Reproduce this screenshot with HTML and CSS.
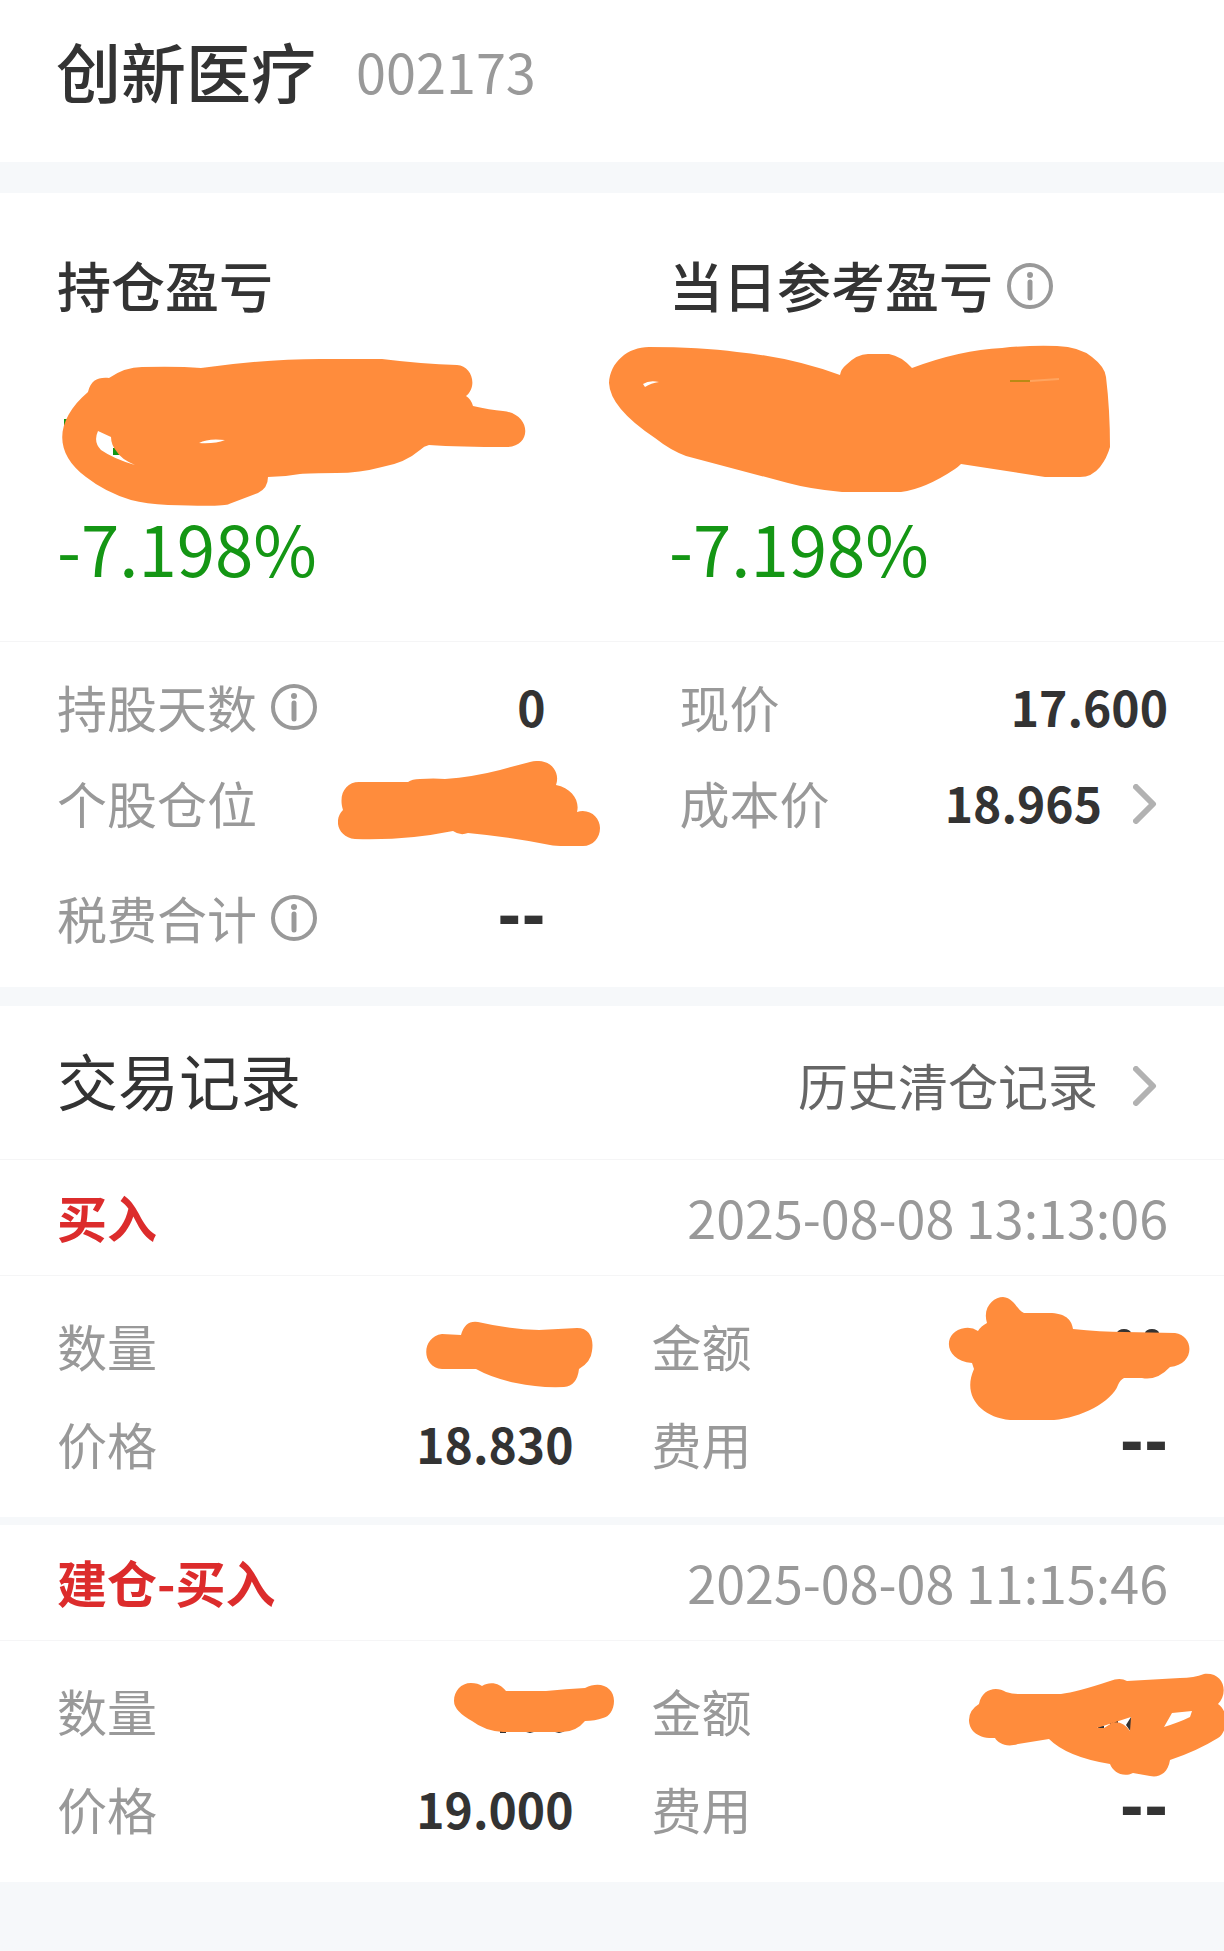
FILE: index.html
```html
<!DOCTYPE html>
<html lang="zh-CN">
<head>
<meta charset="utf-8">
<meta name="viewport" content="width=device-width, initial-scale=1">
<title>创新医疗 002173</title>
<link rel="stylesheet" href="styles.css">
</head>
<body>
<svg class="defs" aria-hidden="true">
  <symbol id="info" viewBox="0 0 46 46">
    <circle cx="23" cy="23" r="21" fill="none" stroke="currentColor" stroke-width="4"/>
    <circle cx="23" cy="12" r="3" fill="currentColor"/>
    <path d="M23 19V35" stroke="currentColor" stroke-width="5" stroke-linecap="round"/>
  </symbol>
  <symbol id="chevron" viewBox="0 0 24 40">
    <path d="M3 3L20 20L3 37" fill="none" stroke="currentColor" stroke-width="6" stroke-linecap="round" stroke-linejoin="round"/>
  </symbol>
</svg>

<header class="stock">
  <h1 class="stock-name">创新医疗</h1>
  <span class="stock-code">002173</span>
</header>

<main>
  <section class="summary">
    <div class="summary-item">
      <h2 class="summary-title">持仓盈亏</h2>
      <div class="summary-amount">
        <svg class="mask mask-position" viewBox="61 358 465 150" aria-hidden="true">
          <path class="loss-ink" d="M64 419H70V426H64ZM113 448H120V455H113Z"/>
          <path class="brush" fill-rule="evenodd" d="M201 368Q265 359 320 359H382Q422 364 457 365C472 366 478 386 466 396Q471 399 473 406Q490 410 503 411C532 414 532 447 507 447Q460 447 429 445Q424 446 420 450Q405 463 382 467Q360 473 336 473Q310 473 300 474Q284 477 268 477Q268 488 258 493L229 504Q225 507 168 505Q146 504 131 500Q105 492 86 477C53 453 55 420 88 392C91 380 98 377 109 378Q125 367 142 367Q178 366 201 368Z M98 431L111 437Q111 445 117 452Q121 459 135 465Q114 459 101 450Q93 442 98 431Z M199 443Q208 438 225 440Q215 444 199 443Z"/>
        </svg>
      </div>
      <p class="summary-rate">-7.198%</p>
    </div>
    <div class="summary-item">
      <h2 class="summary-title">当日参考盈亏
        <button class="info" type="button" aria-label="当日参考盈亏说明"><svg class="info-icon"><use href="#info"/></svg></button>
      </h2>
      <div class="summary-amount">
        <svg class="mask mask-today" viewBox="608 345 503 149" aria-hidden="true">
          <path class="brush" fill-rule="evenodd" d="M609 383C610 362 628 347 649 347Q700 347 737 352Q790 357 840 375Q841 369 846 365Q857 354 868 354H889Q901 356 912 368Q960 350 1002 348Q1030 345 1057 346Q1080 347 1092 357Q1105 367 1106 377Q1110 410 1110 447Q1107 458 1100 467Q1092 477 1080 477H1045L961 464Q958 467 955 469Q925 489 901 492H842Q810 489 788 483L686 456Q670 450 655 438Q610 408 609 383Z M643 384Q649 380 659 382Q651 383 645 387Z"/>
          <path d="M1010 381H1030" stroke="#b98a14" stroke-width="2"/>
          <path d="M1030 381L1059 379" stroke="#ffa45f" stroke-width="2"/>
        </svg>
      </div>
      <p class="summary-rate">-7.198%</p>
    </div>
  </section>

  <dl class="stats">
    <div class="field">
      <dt class="field-label">持股天数
        <button class="info" type="button" aria-label="持股天数说明"><svg class="info-icon"><use href="#info"/></svg></button>
      </dt>
      <dd class="field-value">0</dd>
    </div>
    <div class="field">
      <dt class="field-label">现价</dt>
      <dd class="field-value">17.600</dd>
    </div>
    <div class="field">
      <dt class="field-label">个股仓位</dt>
      <dd class="field-value">
        <svg class="mask mask-ratio" viewBox="338 761 262 86" aria-hidden="true">
          <path class="brush" d="M359 782H408Q412 779 420 779Q434 778 445 779Q473 777 500 770L530 762C549 757 561 771 556 785C572 788 580 801 577 812C590 808 600 818 600 828C600 838 593 846 583 846H565Q555 846 550 845Q510 837 468 833Q460 836 453 831Q433 835 414 837Q385 840 355 839C338 837 333 820 343 810C338 794 346 782 359 782Z"/>
        </svg>
      </dd>
    </div>
    <div class="field">
      <dt class="field-label">成本价</dt>
      <dd class="field-value"><a class="more more-value" href="#cost">18.965<svg class="chevron" aria-hidden="true"><use href="#chevron"/></svg></a></dd>
    </div>
    <div class="field field-apart">
      <dt class="field-label">税费合计
        <button class="info" type="button" aria-label="税费合计说明"><svg class="info-icon"><use href="#info"/></svg></button>
      </dt>
      <dd class="field-value field-empty">--</dd>
    </div>
  </dl>

  <section class="records">
    <div class="records-head">
      <h2 class="records-title">交易记录</h2>
      <a class="more" href="#history">历史清仓记录<svg class="chevron" aria-hidden="true"><use href="#chevron"/></svg></a>
    </div>

    <article class="record">
      <header class="record-head">
        <h3 class="record-type">买入</h3>
        <time class="record-time" datetime="2025-08-08T13:13:06">2025-08-08 13:13:06</time>
      </header>
      <dl class="record-body">
        <div class="field">
          <dt class="field-label">数量</dt>
          <dd class="field-value">
            <svg class="mask mask-count-a" viewBox="425 1320 169 67" aria-hidden="true">
              <path class="brush" d="M442 1333L461 1334Q465 1319 478 1321Q508 1328 539 1329L577 1327C590 1327 594 1338 592 1350Q591 1361 579 1368Q577 1385 564 1386Q538 1387 516 1382Q492 1377 476 1368H442C421 1366 421 1336 442 1333Z"/>
            </svg>
          </dd>
        </div>
        <div class="field">
          <dt class="field-label">金额</dt>
          <dd class="field-value">
            <svg class="mask mask-sum-a" viewBox="948 1295 243 125" aria-hidden="true">
              <path class="value-ink" d="M1117 1332A7 4 0 0 1 1131 1332ZM1145 1332A7 4 0 0 1 1159 1332Z"/>
              <path class="brush" d="M965 1327Q972 1326 978 1330Q981 1325 987 1322C982 1306 994 1296 1003 1296C1014 1297 1017 1309 1024 1312H1052C1067 1313 1072 1320 1073 1328Q1100 1331 1125 1331L1175 1332C1195 1335 1195 1364 1170 1366Q1157 1380 1142 1377H1124Q1120 1379 1118 1384C1112 1401 1080 1417 1054 1419H1010C980 1416 962 1394 974 1368L972 1362C943 1360 942 1330 965 1327Z"/>
            </svg>
          </dd>
        </div>
        <div class="field">
          <dt class="field-label">价格</dt>
          <dd class="field-value">18.830</dd>
        </div>
        <div class="field">
          <dt class="field-label">费用</dt>
          <dd class="field-value field-empty">--</dd>
        </div>
      </dl>
    </article>

    <article class="record">
      <header class="record-head">
        <h3 class="record-type">建仓-买入</h3>
        <time class="record-time" datetime="2025-08-08T11:15:46">2025-08-08 11:15:46</time>
      </header>
      <dl class="record-body">
        <div class="field">
          <dt class="field-label">数量</dt>
          <dd class="field-value">
            <svg class="mask mask-count-b" viewBox="453 1681 162 52" aria-hidden="true">
              <path class="value-ink" d="M500 1729H506V1732H500ZM523 1729H537Q530 1735 523 1729ZM552 1729H566Q559 1735 552 1729Z"/>
              <path class="brush" d="M471 1682Q478 1682 482 1685C490 1680 500 1682 506 1690H546Q566 1688 585 1687C600 1679 614 1686 614 1700C614 1709 609 1716 603 1717Q595 1720 585 1720Q576 1731 562 1731H503Q485 1730 472 1720Q454 1710 454 1700C454 1690 461 1682 471 1682Z"/>
            </svg>
          </dd>
        </div>
        <div class="field">
          <dt class="field-label">金额</dt>
          <dd class="field-value">
            <svg class="mask mask-sum-b" viewBox="968 1672 256 104" aria-hidden="true">
              <path class="value-ink" d="M1098 1725L1104 1725V1729H1098ZM1110 1720H1118V1724H1110ZM1131 1716L1126 1724L1131 1731Z"/>
              <path class="brush" fill-rule="evenodd" d="M979 1703C982 1688 996 1685 1006 1691Q1012 1693 1018 1693H1061Q1077 1691 1110 1680Q1120 1676 1127 1680L1180 1677Q1194 1677 1204 1673C1224 1671 1229 1692 1218 1703C1230 1711 1227 1732 1218 1737Q1197 1750 1170 1759C1168 1773 1158 1777 1150 1775L1133 1772C1123 1777 1113 1771 1110 1763Q1067 1756 1049 1738L1018 1743C1006 1747 998 1742 995 1737C976 1738 969 1728 969 1719Q969 1709 979 1703Z M1097 1727L1131 1716L1130 1730Q1122 1719 1112 1722L1104 1727Z M1172 1712L1192 1710L1190 1716Q1180 1721 1164 1726Z"/>
            </svg>
          </dd>
        </div>
        <div class="field">
          <dt class="field-label">价格</dt>
          <dd class="field-value">19.000</dd>
        </div>
        <div class="field">
          <dt class="field-label">费用</dt>
          <dd class="field-value field-empty">--</dd>
        </div>
      </dl>
    </article>
  </section>
</main>
</body>
</html>
```
FILE: styles.css
```css
* {
  box-sizing: border-box;
}

body {
  margin: 0;
  min-height: 100vh;
  background: #f6f8fa;
  color: #333;
  font-family: "Noto Sans CJK SC", "Noto Sans", sans-serif;
  font-size: 50px;
  overflow-x: hidden;
}

h1, h2, h3, p, dl, dd {
  margin: 0;
}

.defs {
  display: none;
}

.stock {
  display: flex;
  align-items: center;
  gap: 40px;
  padding: 20px 56px 42px;
  background: #fff;
  line-height: 100px;
}

.stock-name {
  font-size: 65px;
  font-weight: 500;
}

.stock-code {
  padding-top: 2px;
  color: #999;
  font-size: 54px;
  line-height: 98px;
}

.summary {
  display: grid;
  grid-template-columns: 1fr 1fr;
  margin-top: 31px;
  padding: 52px 0 54px;
  background: #fff;
  border-bottom: 1px solid #f5f5f6;
}

.summary-item {
  padding-left: 57px;
}

.summary-title {
  display: flex;
  align-items: center;
  gap: 14px;
  font-size: 54px;
  font-weight: 500;
  line-height: 80px;
}

.summary-amount {
  position: relative;
  height: 182px;
}

.summary-rate {
  color: #149614;
  font-size: 69px;
  line-height: 80px;
}

.info {
  display: flex;
  padding: 2px 0 0;
  border: 0;
  background: none;
  color: #999;
}

.info-icon {
  width: 46px;
  height: 46px;
}

.stats {
  display: grid;
  grid-template-columns: 1fr 1fr;
  column-gap: 134px;
  padding: 16px 56px 22px 57px;
  background: #fff;
}

.field {
  position: relative;
  display: flex;
  justify-content: space-between;
  line-height: 96px;
}

.field-apart {
  margin-top: 19px;
}

.field-label {
  display: flex;
  align-items: center;
  gap: 14px;
  color: #999;
}

.field-value {
  font-size: 48px;
  font-weight: 700;
}

.field-empty {
  font-family: "DejaVu Sans", sans-serif;
  font-size: 58px;
}

.more {
  display: flex;
  align-items: center;
  gap: 35px;
  margin-right: 11px;
  color: #666;
  text-decoration: none;
}

.more-value {
  gap: 31px;
  color: inherit;
}

.chevron {
  width: 24px;
  height: 40px;
  margin-top: 4px;
  color: #b2b2b2;
}

.records {
  margin-top: 19px;
}

.records-head {
  display: flex;
  align-items: baseline;
  justify-content: space-between;
  padding: 26px 56px 27px 57px;
  background: #fff;
  border-bottom: 1px solid #f5f5f6;
  line-height: 96px;
}

.records-title {
  font-size: 61px;
  font-weight: 400;
}

.record {
  background: #fff;
}

.record + .record {
  margin-top: 8px;
}

.record-head {
  display: flex;
  align-items: center;
  justify-content: space-between;
  padding: 0 56px 2px 57px;
  border-bottom: 1px solid #f5f5f6;
  line-height: 113px;
}

.record-type {
  color: #dc2c2c;
  font-size: 50px;
  font-weight: 700;
}

.record-time {
  color: #999;
  font-size: 52px;
}

.record-body {
  display: grid;
  grid-template-columns: 1fr 1fr;
  column-gap: 78px;
  padding: 20px 56px 25px 57px;
}

.record-body .field {
  line-height: 98px;
}

/* Brush strokes that hide private amounts */
.mask {
  position: absolute;
}

.brush {
  fill: #ff8c3c;
}

.value-ink {
  fill: #333;
}

.loss-ink {
  fill: #149614;
}

.mask-position {
  top: 33px;
  left: 4px;
  width: 465px;
  height: 150px;
}

.mask-today {
  top: 20px;
  left: -61px;
  width: 503px;
  height: 149px;
}

.mask-ratio {
  top: 7px;
  right: -54px;
  width: 262px;
  height: 86px;
}

.mask-count-a {
  top: 25px;
  right: -20px;
  width: 169px;
  height: 67px;
}

.mask-sum-a {
  top: 0;
  right: -23px;
  width: 243px;
  height: 125px;
}

.mask-count-b {
  top: 21px;
  right: -41px;
  width: 162px;
  height: 52px;
}

.mask-sum-b {
  top: 12px;
  right: -56px;
  width: 256px;
  height: 104px;
}
```
